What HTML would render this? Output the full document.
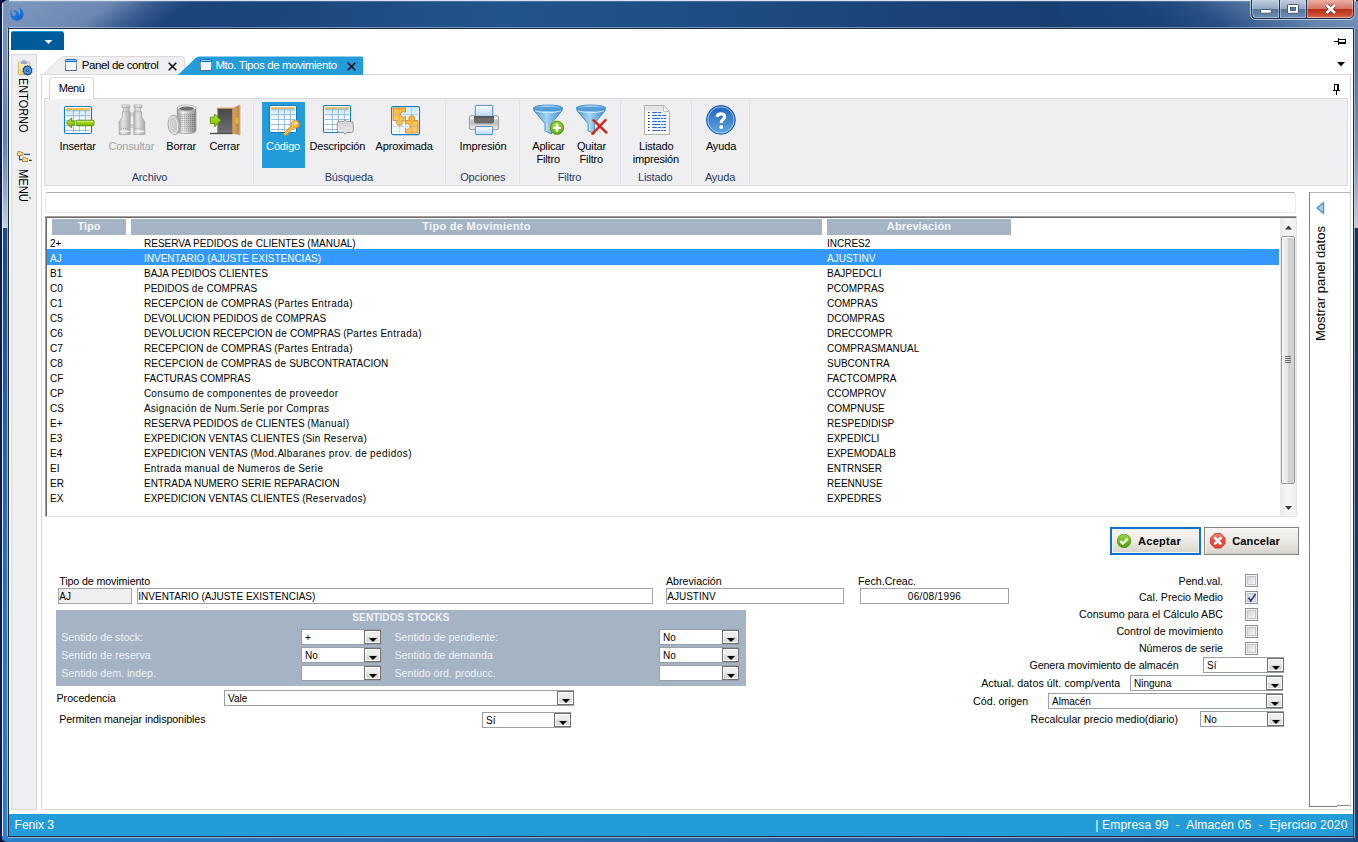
<!DOCTYPE html>
<html><head><meta charset="utf-8"><title>Fenix 3</title>
<style>

html,body{margin:0;padding:0;}
body{width:1358px;height:842px;overflow:hidden;position:relative;background:#1a4478;font-family:"Liberation Sans",sans-serif;font-size:11px;color:#000;}
.b{position:absolute;box-sizing:border-box;}
.t{position:absolute;white-space:nowrap;}
svg{position:absolute;overflow:visible;}
.combo{position:absolute;box-sizing:border-box;border:1px solid #9a9fa6;background:#fff;height:16px;}
.combo .cb{position:absolute;right:-1px;top:0;width:17px;height:14px;box-sizing:border-box;border:1px solid #6f6f6f;box-shadow:inset 0 0 0 1px #fff;background:linear-gradient(#ededed 0,#ededed 50%,#dbdbdb 50%,#dbdbdb 100%);}
.combo .cb:after{content:"";position:absolute;left:3.7px;top:7px;border-left:4px solid transparent;border-right:4px solid transparent;border-top:4px solid #000;}
.combo span{position:absolute;left:3px;top:0;font-size:10px;line-height:15px;}
.chk{position:absolute;box-sizing:border-box;width:13px;height:13px;border:1px solid #8e8f8f;background:#f4f4f4;box-shadow:inset 0 0 0 1px #f4f4f4, inset 0 0 0 2px #c4c6c9;}
.chk i{position:absolute;left:2px;top:2px;width:7px;height:7px;background:linear-gradient(135deg,#d4d6da,#f6f6f6);}
.fld{position:absolute;box-sizing:border-box;border:1px solid #a3a3a5;background:#fff;height:16px;font-size:10px;line-height:15px;padding-left:0.3px;white-space:nowrap;}
.row{position:absolute;left:47px;width:1232px;height:15px;font-size:10px;line-height:15px;white-space:nowrap;}
.row span{position:absolute;top:0;}
.row.selt{color:#fff;}
.row i{font-style:normal;letter-spacing:.44px;}
.hdr{position:absolute;background:#a4b4c5;color:#f2f5f8;font-weight:bold;font-size:11px;line-height:15px;text-align:center;height:16px;top:219px;}
.rl{color:#000;text-align:center;}
.gl{color:#2a3a66;}

</style></head>
<body>
<div class="b" style="left:0;top:0;width:1358px;height:842px;background:#1d4a82;"></div>
<div class="b" style="left:300px;top:0;width:758px;height:29px;background:linear-gradient(90deg,#1c467d 0px,#1f4b84 60px,#23538c 200px,#1f4d86 380px,#1b4379 600px,#173f72 758px);"></div>
<div class="b" style="left:0;top:0;width:300px;height:29px;background:linear-gradient(145deg,#7d96bc 12px,#6c88b2 66px,#35598d 92px,#1b447b 112px,#1c467d 196px);"></div>
<div class="b" style="left:1058px;top:0;width:300px;height:29px;background:linear-gradient(30deg,#173f72 0px,#1a4378 58px,#264e82 84px,#45699a 108px,#6484ad 134px,#7491b7 160px,#7491b7 175px);"></div>
<div class="b" style="left:2px;top:0;width:1354px;height:1px;background:#dbe4ef;"></div>
<div class="b" style="left:2px;top:1px;width:1354px;height:1px;background:#fff;opacity:.18;"></div>
<div class="b" style="left:8px;top:27px;width:1346px;height:1px;background:#fff;opacity:.4;"></div>
<div class="b" style="left:0;top:0;width:9px;height:842px;background:linear-gradient(180deg,#7b94bb 0px,#7690b8 60px,#5f82b1 140px,#8ea7c8 190px,#c5d2e2 228px,#1b4a8a 228px,#1f5698 330px,#2669b0 480px,#2a78c0 650px,#2b80c8 842px);"></div>
<div class="b" style="left:0;top:0;width:2px;height:842px;background:#0a1c4d;"></div>
<div class="b" style="left:2px;top:1px;width:1px;height:838px;background:#e3ebf5;"></div>
<div class="b" style="left:7px;top:28px;width:1px;height:810px;background:#c3d5ea;opacity:.7"></div>
<div class="b" style="left:2px;top:836px;width:1356px;height:6px;background:linear-gradient(90deg,#2b80c8 0px,#2a74ba 300px,#2868ab 700px,#225a9a 1000px,#1c4a85 1358px);"></div>
<div class="b" style="left:8px;top:837px;width:1347px;height:1px;background:#a9c3e2;opacity:.85"></div>
<div class="b" style="left:1353px;top:29px;width:5px;height:813px;background:linear-gradient(180deg,#5a7ba5 0px,#55769f 40px,#7e98bb 130px,#c4cdd9 199px,#14335f 199px,#163a69 500px,#1a4379 813px);"></div>
<div class="b" style="left:1354px;top:28px;width:1px;height:810px;background:#b9cde6;opacity:.7"></div>
<div class="b" style="left:1356px;top:0;width:2px;height:1px;background:#0a0f25;"></div>
<svg style="left:0;top:0" width="10" height="10"><path d="M0 0H7Q2 1 0 8Z" fill="#08123f"/></svg>
<svg style="left:0;top:832px" width="10" height="10"><path d="M0 10V4Q2 9 7 10Z" fill="#08123f"/></svg>
<div class="b" id="client" style="left:8px;top:28px;width:1346px;height:809px;background:#fff;border:1px solid #1a2f4d;"></div>
<svg style="left:4px;top:2px" width="30" height="24" viewBox="4 2 30 24"><defs><linearGradient id="lg" x1="0" y1="0" x2="1" y2="1"><stop offset="0" stop-color="#2f86e6"/><stop offset="1" stop-color="#0b62d0"/></linearGradient></defs>
<path d="M12.300 8.300C9.400 11 9.400 16.800 13 19.600C16 21.700 20.600 20.800 22.700 17.600C24.600 14.600 23.600 10.400 19 7.100C20.600 10.200 20.500 13.200 19.200 15.600C18.600 12.700 17.100 10.300 14.600 10C13.500 10 12.900 10.600 13 11.600C15.400 11.400 16.600 13.400 15.600 15C14.600 16.500 12.600 16.200 12 14.800C11.400 13 11.300 10.800 12.300 8.300Z" fill="url(#lg)"/>
</svg>
<svg style="left:1250px;top:0" width="105" height="21" viewBox="0 0 105 21">
<defs>
<linearGradient id="wb" x1="0" y1="0" x2="0" y2="1"><stop offset="0" stop-color="#c2cfdf"/><stop offset=".48" stop-color="#90a6c4"/><stop offset=".5" stop-color="#55749b"/><stop offset="1" stop-color="#7190b7"/></linearGradient>
<linearGradient id="wr" x1="0" y1="0" x2="0" y2="1"><stop offset="0" stop-color="#e9b0a5"/><stop offset=".48" stop-color="#d67363"/><stop offset=".5" stop-color="#b72f19"/><stop offset=".8" stop-color="#cb4a32"/><stop offset="1" stop-color="#dc7a62"/></linearGradient>
</defs>
<path d="M.5 0V14Q.5 19.5 6 19.5H98.500Q104 19.500 104 14V0" fill="none" stroke="#dfe8f3" stroke-opacity=".7" stroke-width="1"/>
<path d="M1.5 0V13.500Q1.5 18.500 6.5 18.500H98Q103.500 18.500 103.500 13.500V0Z" fill="url(#wb)"/>
<path d="M56.500 0V18.500H98Q103.500 18.500 103.500 13.500V0Z" fill="url(#wr)"/>
<path d="M1.5 0V13.500Q1.5 18.500 6.5 18.500H98Q103.500 18.500 103.500 13.500V0M29.500 0V18.500M56.500 0V18.500" fill="none" stroke="#1f2f4a" stroke-width="1"/>
<path d="M2.5 1V13.500Q2.5 17.500 6.5 17.500H28.500V1M30.500 1V17.500H55.500V1M57.500 1V17.500H98Q102.500 17.500 102.500 13.500V1" fill="none" stroke="#fff" stroke-opacity=".35"/>
<rect x="10.700" y="9.500" width="10.600" height="3.700" rx=".6" fill="#fff" stroke="#3c4f6c" stroke-width=".9"/>
<rect x="37.500" y="4.500" width="11" height="8.800" rx=".8" fill="#fff" stroke="#3c4f6c" stroke-width=".9"/>
<rect x="40.500" y="7.400" width="5" height="3" fill="#5878a2" stroke="#3c4f6c" stroke-width=".8"/>
<path d="M76.500 5L85 13M85 5L76.500 13" stroke="#4b2d2d" stroke-width="4.200" fill="none" stroke-opacity=".85"/>
<path d="M76.500 5L85 13M85 5L76.500 13" stroke="#fff" stroke-width="2.700" fill="none"/>
</svg>
<div class="b" style="left:9px;top:814px;width:1344px;height:22px;background:#259cda;"></div>
<div class="t " style="top:818.04px;font-size:12px;line-height:14px;left:14.60px;color:#fff;">Fenix 3</div>
<div class="t " style="top:818.04px;font-size:12px;line-height:14px;right:10.50px;color:#fff;letter-spacing:0.18px;">| Empresa 99&nbsp; -&nbsp; Almacén 05&nbsp; -&nbsp; Ejercicio 2020</div>
<div class="b" style="left:11px;top:31px;width:53px;height:19px;background:#005b9a;border-top:1px solid #1b95d9;border-radius:2px 3px 0 0;"></div>
<svg style="left:44px;top:39px" width="9" height="6"><path d="M0.5 1H8.5L4.5 5Z" fill="#fff"/></svg>
<div class="b" style="left:11px;top:54px;width:26px;height:756px;background:#efeff1;border:1px solid #d9d9dc;"></div>
<svg style="left:40px;top:54px" width="340" height="22" viewBox="40 54 340 22">
<path d="M43.5 74.5L61 57.5Q62 56.5 63.5 56.5H181Q184.5 56.5 184.5 60V74.5Z" fill="#efeff1" stroke="#d9d9dc"/>
<path d="M178 75L195.5 58Q197 56.5 199 56.5H361.5Q363.2 56.5 363.2 58.200V75Z" fill="#259cda"/>
</svg>
<div class="b" style="left:41px;top:74px;width:1310px;height:736px;border:1px solid #d9d9dc;background:#fff;"></div>
<div class="b" style="left:178px;top:74px;width:185px;height:1px;background:#259cda;"></div>
<svg style="left:65px;top:59px" width="12" height="12" viewBox="0 0 12 12"><defs><linearGradient id="tib65" x1="0" y1="0" x2="0" y2="1"><stop offset="0" stop-color="#b9a352"/><stop offset=".45" stop-color="#8a8f86"/><stop offset="1" stop-color="#566c96"/></linearGradient><linearGradient id="tif65" x1="0" y1="0" x2="0" y2="1"><stop offset="0" stop-color="#dff4fd"/><stop offset="1" stop-color="#ffffff"/></linearGradient></defs><rect x=".5" y="2.5" width="11" height="9" fill="url(#tif65)" stroke="url(#tib65)"/><path d="M0 3V1.600Q0 0 1.600 0H10.400Q12 0 12 1.600V3Z" fill="#1f6bc9"/><rect x="1" y="1" width="10" height=".9" fill="#a9d5f8"/></svg>
<svg style="left:200px;top:59px" width="12" height="12" viewBox="0 0 12 12"><defs><linearGradient id="tib200" x1="0" y1="0" x2="0" y2="1"><stop offset="0" stop-color="#b9a352"/><stop offset=".45" stop-color="#8a8f86"/><stop offset="1" stop-color="#566c96"/></linearGradient><linearGradient id="tif200" x1="0" y1="0" x2="0" y2="1"><stop offset="0" stop-color="#dff4fd"/><stop offset="1" stop-color="#ffffff"/></linearGradient></defs><rect x=".5" y="2.5" width="11" height="9" fill="url(#tif200)" stroke="url(#tib200)"/><path d="M0 3V1.600Q0 0 1.600 0H10.400Q12 0 12 1.600V3Z" fill="#1f6bc9"/><rect x="1" y="1" width="10" height=".9" fill="#a9d5f8"/></svg>
<div class="t " style="top:58.02px;font-size:11.5px;line-height:14px;left:81.70px;letter-spacing:-0.4px;">Panel de control</div>
<div class="t " style="top:58.02px;font-size:11.5px;line-height:14px;left:215.40px;color:#fff;letter-spacing:-0.4px;">Mto. Tipos de movimiento</div>
<svg style="left:168px;top:62px" width="9" height="9"><path d="M0.7 0.7L8.3 8.3M8.3 0.7L0.7 8.3" stroke="#000" stroke-width="1.4"/></svg>
<svg style="left:347px;top:62px" width="9" height="9"><path d="M0.7 0.7L8.3 8.3M8.3 0.7L0.7 8.3" stroke="#000" stroke-width="1.4"/></svg>
<div class="b" style="left:1334px;top:41px;width:4px;height:1px;background:#000;"></div>
<div class="b" style="left:1338px;top:38px;width:1px;height:7px;background:#000;"></div>
<div class="b" style="left:1339px;top:39px;width:7px;height:1px;background:#000;"></div>
<div class="b" style="left:1345px;top:39px;width:1px;height:5px;background:#000;"></div>
<div class="b" style="left:1339px;top:42px;width:7px;height:2px;background:#000;"></div>
<svg style="left:1337px;top:62px" width="8" height="5"><path d="M0 0H8L4 4.300Z" fill="#000"/></svg>
<div class="b" style="left:1334px;top:84px;width:1px;height:6px;background:#000;"></div>
<div class="b" style="left:1334px;top:84px;width:5px;height:1px;background:#000;"></div>
<div class="b" style="left:1337px;top:84px;width:2px;height:6px;background:#000;"></div>
<div class="b" style="left:1333px;top:90px;width:7px;height:1px;background:#000;"></div>
<div class="b" style="left:1336px;top:91px;width:1px;height:4px;background:#000;"></div>
<div class="b" style="left:44px;top:98px;width:1304px;height:88px;background:#efeff1;border:1px solid #d9d9dc;"></div>
<div class="b" style="left:49px;top:77px;width:45px;height:22px;background:#fff;border:1px solid #d9d9dc;border-bottom:none;border-radius:3px 3px 0 0;"></div>
<div class="b" style="left:50px;top:98px;width:43px;height:1px;background:#fff;"></div>
<div class="t " style="top:82.19px;font-size:11px;line-height:13px;left:58.80px;letter-spacing:-0.5px;">Menú</div>
<div class="b" style="left:253px;top:100px;width:1px;height:84px;background:#dfe0ee;"></div>
<div class="b" style="left:445px;top:100px;width:1px;height:84px;background:#dfe0ee;"></div>
<div class="b" style="left:519px;top:100px;width:1px;height:84px;background:#dfe0ee;"></div>
<div class="b" style="left:620px;top:100px;width:1px;height:84px;background:#dfe0ee;"></div>
<div class="b" style="left:691px;top:100px;width:1px;height:84px;background:#dfe0ee;"></div>
<div class="b" style="left:749px;top:100px;width:1px;height:84px;background:#dfe0ee;"></div>
<div class="b" style="left:262px;top:102px;width:43px;height:66px;background:#259cda;"></div>
<div class="t " style="top:139.69px;font-size:11px;line-height:13px;left:27.60px;width:100px;text-align:center;color:#000;letter-spacing:-0.15px;">Insertar</div>
<div class="t " style="top:139.69px;font-size:11px;line-height:13px;left:81.40px;width:100px;text-align:center;color:#a3a3a3;letter-spacing:-0.15px;">Consultar</div>
<div class="t " style="top:139.69px;font-size:11px;line-height:13px;left:131.20px;width:100px;text-align:center;color:#000;letter-spacing:-0.15px;">Borrar</div>
<div class="t " style="top:139.69px;font-size:11px;line-height:13px;left:174.70px;width:100px;text-align:center;color:#000;letter-spacing:-0.15px;">Cerrar</div>
<div class="t " style="top:139.69px;font-size:11px;line-height:13px;left:233.10px;width:100px;text-align:center;color:#fff;letter-spacing:-0.15px;">Código</div>
<div class="t " style="top:139.69px;font-size:11px;line-height:13px;left:287.30px;width:100px;text-align:center;color:#000;letter-spacing:-0.15px;">Descripción</div>
<div class="t " style="top:139.69px;font-size:11px;line-height:13px;left:354.10px;width:100px;text-align:center;color:#000;letter-spacing:-0.15px;">Aproximada</div>
<div class="t " style="top:139.69px;font-size:11px;line-height:13px;left:433.00px;width:100px;text-align:center;color:#000;letter-spacing:-0.15px;">Impresión</div>
<div class="t " style="top:139.69px;font-size:11px;line-height:13px;left:498.50px;width:100px;text-align:center;color:#000;letter-spacing:-0.15px;">Aplicar</div>
<div class="t " style="top:153.09px;font-size:11px;line-height:13px;left:498.20px;width:100px;text-align:center;color:#000;letter-spacing:-0.15px;">Filtro</div>
<div class="t " style="top:139.69px;font-size:11px;line-height:13px;left:541.50px;width:100px;text-align:center;color:#000;letter-spacing:-0.15px;">Quitar</div>
<div class="t " style="top:153.09px;font-size:11px;line-height:13px;left:541.30px;width:100px;text-align:center;color:#000;letter-spacing:-0.15px;">Filtro</div>
<div class="t " style="top:139.69px;font-size:11px;line-height:13px;left:606.20px;width:100px;text-align:center;color:#000;letter-spacing:-0.15px;">Listado</div>
<div class="t " style="top:153.09px;font-size:11px;line-height:13px;left:605.90px;width:100px;text-align:center;color:#000;letter-spacing:-0.15px;">impresión</div>
<div class="t " style="top:139.69px;font-size:11px;line-height:13px;left:671.00px;width:100px;text-align:center;color:#000;letter-spacing:-0.15px;">Ayuda</div>
<div class="t " style="top:170.89px;font-size:11px;line-height:13px;left:99.50px;width:100px;text-align:center;color:#2a3a66;letter-spacing:-0.15px;">Archivo</div>
<div class="t " style="top:170.89px;font-size:11px;line-height:13px;left:298.80px;width:100px;text-align:center;color:#2a3a66;letter-spacing:-0.15px;">Búsqueda</div>
<div class="t " style="top:170.89px;font-size:11px;line-height:13px;left:432.80px;width:100px;text-align:center;color:#2a3a66;letter-spacing:-0.15px;">Opciones</div>
<div class="t " style="top:170.89px;font-size:11px;line-height:13px;left:519.50px;width:100px;text-align:center;color:#2a3a66;letter-spacing:-0.15px;">Filtro</div>
<div class="t " style="top:170.89px;font-size:11px;line-height:13px;left:605.20px;width:100px;text-align:center;color:#2a3a66;letter-spacing:-0.15px;">Listado</div>
<div class="t " style="top:170.89px;font-size:11px;line-height:13px;left:670.00px;width:100px;text-align:center;color:#2a3a66;letter-spacing:-0.15px;">Ayuda</div>
<div class="b" style="left:45px;top:192px;width:1251px;height:21px;background:#fff;border:1px solid #e3e9ef;border-top-color:#abadb3;border-radius:3px;"></div>
<div class="b" style="left:45px;top:216px;width:1252px;height:301px;background:#fff;border:1px solid #e3e3e3;border-top:1px solid #a0a0a0;border-left:1px solid #a0a0a0;"></div>
<div class="b" style="left:46px;top:217px;width:1250px;height:299px;border-top:1px solid #696969;border-left:1px solid #696969;"></div>
<div class="hdr" style="left:52px;width:74px;">Tipo</div>
<div class="hdr" style="left:131px;width:691px;letter-spacing:.3px;">Tipo de Movimiento</div>
<div class="hdr" style="left:827px;width:184px;letter-spacing:.12px;">Abreviación</div>
<div class="b" style="left:47px;top:249px;width:1232px;height:16px;background:#3399ff;"></div>
<div class="row" style="top:236px"><span class="c1" style="left:3px">2+</span><span class="c2" style="left:97px">RESERVA PEDIDOS <i>de</i> CLIENTES (MANUAL)</span><span class="c3" style="left:780px">INCRES2</span></div>
<div class="row selt" style="top:251px"><span class="c1" style="left:3px">AJ</span><span class="c2" style="left:97px">INVENTARIO (AJUSTE EXISTENCIAS)</span><span class="c3" style="left:780px">AJUSTINV</span></div>
<div class="row" style="top:266px"><span class="c1" style="left:3px">B1</span><span class="c2" style="left:97px">BAJA PEDIDOS CLIENTES</span><span class="c3" style="left:780px">BAJPEDCLI</span></div>
<div class="row" style="top:281px"><span class="c1" style="left:3px">C0</span><span class="c2" style="left:97px">PEDIDOS <i>de</i> COMPRAS</span><span class="c3" style="left:780px">PCOMPRAS</span></div>
<div class="row" style="top:296px"><span class="c1" style="left:3px">C1</span><span class="c2" style="left:97px">RECEPCION <i>de</i> COMPRAS (P<i>artes</i> E<i>ntrada</i>)</span><span class="c3" style="left:780px">COMPRAS</span></div>
<div class="row" style="top:311px"><span class="c1" style="left:3px">C5</span><span class="c2" style="left:97px">DEVOLUCION PEDIDOS <i>de</i> COMPRAS</span><span class="c3" style="left:780px">DCOMPRAS</span></div>
<div class="row" style="top:326px"><span class="c1" style="left:3px">C6</span><span class="c2" style="left:97px">DEVOLUCION RECEPCION <i>de</i> COMPRAS (P<i>artes</i> E<i>ntrada</i>)</span><span class="c3" style="left:780px">DRECCOMPR</span></div>
<div class="row" style="top:341px"><span class="c1" style="left:3px">C7</span><span class="c2" style="left:97px">RECEPCION <i>de</i> COMPRAS (P<i>artes</i> E<i>ntrada</i>)</span><span class="c3" style="left:780px">COMPRASMANUAL</span></div>
<div class="row" style="top:356px"><span class="c1" style="left:3px">C8</span><span class="c2" style="left:97px">RECEPCION <i>de</i> COMPRAS <i>de</i> SUBCONTRATACION</span><span class="c3" style="left:780px">SUBCONTRA</span></div>
<div class="row" style="top:371px"><span class="c1" style="left:3px">CF</span><span class="c2" style="left:97px">FACTURAS COMPRAS</span><span class="c3" style="left:780px">FACTCOMPRA</span></div>
<div class="row" style="top:386px"><span class="c1" style="left:3px">CP</span><span class="c2" style="left:97px">C<i>onsumo</i> <i>de</i> <i>componentes</i> <i>de</i> <i>proveedor</i></span><span class="c3" style="left:780px">CCOMPROV</span></div>
<div class="row" style="top:401px"><span class="c1" style="left:3px">CS</span><span class="c2" style="left:97px">A<i>signación</i> <i>de</i> N<i>um.</i>S<i>erie</i> <i>por</i> C<i>ompras</i></span><span class="c3" style="left:780px">COMPNUSE</span></div>
<div class="row" style="top:416px"><span class="c1" style="left:3px">E+</span><span class="c2" style="left:97px">RESERVA PEDIDOS <i>de</i> CLIENTES (M<i>anual</i>)</span><span class="c3" style="left:780px">RESPEDIDISP</span></div>
<div class="row" style="top:431px"><span class="c1" style="left:3px">E3</span><span class="c2" style="left:97px">EXPEDICION VENTAS CLIENTES (S<i>in</i> R<i>eserva</i>)</span><span class="c3" style="left:780px">EXPEDICLI</span></div>
<div class="row" style="top:446px"><span class="c1" style="left:3px">E4</span><span class="c2" style="left:97px">EXPEDICION VENTAS (M<i>od.</i>A<i>lbaranes</i> <i>prov.</i> <i>de</i> <i>pedidos</i>)</span><span class="c3" style="left:780px">EXPEMODALB</span></div>
<div class="row" style="top:461px"><span class="c1" style="left:3px">EI</span><span class="c2" style="left:97px">E<i>ntrada</i> <i>manual</i> <i>de</i> N<i>umeros</i> <i>de</i> S<i>erie</i></span><span class="c3" style="left:780px">ENTRNSER</span></div>
<div class="row" style="top:476px"><span class="c1" style="left:3px">ER</span><span class="c2" style="left:97px">ENTRADA NUMERO SERIE REPARACION</span><span class="c3" style="left:780px">REENNUSE</span></div>
<div class="row" style="top:491px"><span class="c1" style="left:3px">EX</span><span class="c2" style="left:97px">EXPEDICION VENTAS CLIENTES (R<i>eservados</i>)</span><span class="c3" style="left:780px">EXPEDRES</span></div>
<div class="b" style="left:1280px;top:218px;width:16px;height:298px;background:linear-gradient(90deg,#e9e9eb,#f6f6f7 50%,#efeff0);"></div>
<div class="b" style="left:1281px;top:236px;width:14px;height:248px;border:1px solid #979797;border-radius:2px;background:linear-gradient(90deg,#f3f3f3 0%,#e6e6e8 45%,#cfcfd3 55%,#d6d6da 100%);box-shadow:inset 1px 1px 0 #fff;"></div>
<svg style="left:1285px;top:224.5px" width="7" height="5"><path d="M0 4.5L3.5 0.5L7 4.5Z" fill="#3c3c3c"/></svg>
<svg style="left:1285px;top:506px" width="7" height="5"><path d="M0 0L3.5 4L7 0Z" fill="#3c3c3c"/></svg>
<div class="b" style="left:1285px;top:356px;width:6px;height:7px;background:repeating-linear-gradient(180deg,#6b6b6b 0,#6b6b6b 1px,transparent 1px,transparent 2px);"></div>
<div class="b" style="left:1110px;top:527px;width:91px;height:28px;border:2px solid #0f72d2;background:linear-gradient(#f6f5f2 0%,#eceae5 50%,#e2dfd8 75%,#d6d3cb 100%);box-shadow:inset 0 0 0 1px #f6f3ec;"></div>
<div class="b" style="left:1204px;top:527px;width:95px;height:28px;border:1px solid #828282;background:linear-gradient(#f6f5f2 0%,#eceae5 50%,#e2dfd8 75%,#d6d3cb 100%);box-shadow:inset 1px 1px 0 #fbfaf8;"></div>
<div class="t " style="top:534.69px;font-size:11px;line-height:13px;left:1138.00px;font-weight:bold;letter-spacing:0.3px;">Aceptar</div>
<div class="t " style="top:534.69px;font-size:11px;line-height:13px;left:1232.20px;font-weight:bold;letter-spacing:0.17px;">Cancelar</div>
<svg style="left:1116px;top:533px" width="16" height="16" viewBox="0 0 16 16"><defs><linearGradient id="gok" x1="0" y1="0" x2="0" y2="1"><stop offset="0" stop-color="#a4d943"/><stop offset=".55" stop-color="#6fb81a"/><stop offset="1" stop-color="#4c9a0c"/></linearGradient></defs><circle cx="8" cy="8" r="6.7" fill="url(#gok)" stroke="#4d9610" stroke-width=".8"/><path d="M4.300 8.200L6.900 10.700L11.600 5.600" stroke="#fff" stroke-width="2.300" fill="none"/></svg>
<svg style="left:1210px;top:533px" width="16" height="16" viewBox="0 0 16 16"><defs><linearGradient id="gno" x1="0" y1="0" x2="0" y2="1"><stop offset="0" stop-color="#f7887a"/><stop offset=".5" stop-color="#ec4838"/><stop offset="1" stop-color="#e8402f"/></linearGradient></defs><path d="M4.800 .6H10.700L15 4.900V10.800L10.700 15H4.800L.6 10.800V4.900Z" fill="url(#gno)" stroke="#cf3526" stroke-width=".9"/><path d="M5 5L10.500 10.500M10.500 5L5 10.500" stroke="#fff" stroke-width="2.500" stroke-linecap="round"/></svg>
<div class="t " style="top:575.00px;font-size:10.67px;line-height:13px;left:59.20px;letter-spacing:-0.1px;">Tipo de movimiento</div>
<div class="t " style="top:575.00px;font-size:10.67px;line-height:13px;left:666.00px;">Abreviación</div>
<div class="t " style="top:575.00px;font-size:10.67px;line-height:13px;left:858.00px;">Fech.Creac.</div>
<div class="fld" style="left:58px;top:588px;width:74px;background:#efeff1;">AJ</div>
<div class="fld" style="left:137px;top:588px;width:516px;">INVENTARIO (AJUSTE EXISTENCIAS)</div>
<div class="fld" style="left:666px;top:588px;width:178px;">AJUSTINV</div>
<div class="fld" style="left:860px;top:588px;width:149px;text-align:center;padding-left:0;letter-spacing:.33px;">06/08/1996</div>
<div class="b" style="left:56px;top:610px;width:690px;height:76px;background:#a4b4c5;"></div>
<div class="t " style="top:611.63px;font-size:10px;line-height:12px;left:352.30px;color:#f0f3f7;font-weight:bold;letter-spacing:0.12px;">SENTIDOS STOCKS</div>
<div class="t " style="top:630.50px;font-size:10.67px;line-height:13px;left:61.20px;color:#eef2f6;">Sentido de stock:</div>
<div class="t " style="top:648.60px;font-size:10.67px;line-height:13px;left:61.20px;color:#eef2f6;">Sentido de reserva</div>
<div class="t " style="top:666.50px;font-size:10.67px;line-height:13px;left:61.20px;color:#eef2f6;">Sentido dem. indep.</div>
<div class="t " style="top:630.50px;font-size:10.67px;line-height:13px;left:394.50px;color:#eef2f6;">Sentido de pendiente:</div>
<div class="t " style="top:648.60px;font-size:10.67px;line-height:13px;left:394.50px;color:#eef2f6;">Sentido de demanda</div>
<div class="t " style="top:666.50px;font-size:10.67px;line-height:13px;left:394.50px;color:#eef2f6;">Sentido órd. producc.</div>
<div class="combo" style="left:301px;top:629px;width:80px;"><span>+</span><div class="cb"></div></div>
<div class="combo" style="left:301px;top:647px;width:80px;"><span>No</span><div class="cb"></div></div>
<div class="combo" style="left:301px;top:665px;width:80px;"><span></span><div class="cb"></div></div>
<div class="combo" style="left:659px;top:629px;width:80px;"><span>No</span><div class="cb"></div></div>
<div class="combo" style="left:659px;top:647px;width:80px;"><span>No</span><div class="cb"></div></div>
<div class="combo" style="left:659px;top:665px;width:80px;"><span></span><div class="cb"></div></div>
<div class="t " style="top:691.70px;font-size:10.67px;line-height:13px;left:56.50px;">Procedencia</div>
<div class="combo" style="left:224px;top:690px;width:350px;"><span>Vale</span><div class="cb"></div></div>
<div class="t " style="top:713.10px;font-size:10.67px;line-height:13px;left:59.20px;letter-spacing:-0.08px;">Permiten manejar indisponibles</div>
<div class="combo" style="left:482px;top:712px;width:89px;"><span>Sí</span><div class="cb"></div></div>
<div class="t " style="top:574.80px;font-size:10.67px;line-height:13px;right:135.00px;">Pend.val.</div>
<div class="chk" style="left:1245px;top:574px"><i></i></div>
<div class="t " style="top:590.60px;font-size:10.67px;line-height:13px;right:135.00px;">Cal. Precio Medio</div>
<div class="chk" style="left:1245px;top:591px"><i></i><svg style="left:1px;top:1px" width="10" height="10"><path d="M1.5 4.5L3.8 8L8.5 1" stroke="#2f3f8f" stroke-width="1.7" fill="none"/></svg></div>
<div class="t " style="top:607.80px;font-size:10.67px;line-height:13px;right:135.00px;">Consumo para el Cálculo ABC</div>
<div class="chk" style="left:1245px;top:608px"><i></i></div>
<div class="t " style="top:625.00px;font-size:10.67px;line-height:13px;right:135.00px;">Control de movimiento</div>
<div class="chk" style="left:1245px;top:625px"><i></i></div>
<div class="t " style="top:642.00px;font-size:10.67px;line-height:13px;right:135.00px;">Números de serie</div>
<div class="chk" style="left:1245px;top:642px"><i></i></div>
<div class="t " style="top:659.00px;font-size:10.67px;line-height:13px;right:179.50px;letter-spacing:-0.07px;">Genera movimiento de almacén</div>
<div class="combo" style="left:1203px;top:657px;width:81px;"><span>Sí</span><div class="cb"></div></div>
<div class="t " style="top:677.00px;font-size:10.67px;line-height:13px;right:237.70px;letter-spacing:0.08px;">Actual. datos últ. comp/venta</div>
<div class="combo" style="left:1130px;top:675px;width:153px;"><span>Ninguna</span><div class="cb"></div></div>
<div class="t " style="top:695.40px;font-size:10.67px;line-height:13px;right:329.80px;">Cód. origen</div>
<div class="combo" style="left:1048px;top:693px;width:235px;"><span>Almacén</span><div class="cb"></div></div>
<div class="t " style="top:712.50px;font-size:10.67px;line-height:13px;right:180.00px;">Recalcular precio medio(diario)</div>
<div class="combo" style="left:1200px;top:711px;width:84px;"><span>No</span><div class="cb"></div></div>
<div class="b" style="left:1309px;top:192px;width:42px;height:615px;border-left:1px solid #7d7d8c;border-top:1px solid #b8b8c0;"></div>
<div class="b" style="left:1309px;top:806px;width:28px;height:1px;background:#7d7d8c;"></div>
<div class="b" style="left:1337px;top:805px;width:13px;height:1px;background:#8a8a96;"></div>
<svg style="left:1316px;top:201px" width="9" height="14"><path d="M7.5 1.5V12.5L1 7Z" fill="#a8d0ee" stroke="#3f8fd0" stroke-width="1.2"/></svg>
<div class="t" style="left:1314px;top:341px;font-size:13px;line-height:14px;transform-origin:0 0;transform:rotate(-90deg);">Mostrar panel datos</div>
<div class="t" style="left:30.5px;top:78.3px;font-size:13px;line-height:15px;transform-origin:0 0;transform:rotate(90deg) scaleX(0.84);">ENTORNO</div>
<div class="t" style="left:30.5px;top:168.6px;font-size:13px;line-height:15px;transform-origin:0 0;transform:rotate(90deg) scaleX(0.86);">MENÚ</div>
<svg style="left:12px;top:56px" width="24" height="24" viewBox="12 56 24 24">
<defs><linearGradient id="gclip" x1="0" y1="0" x2="0" y2="1"><stop offset="0" stop-color="#fdf1d3"/><stop offset="1" stop-color="#fbd26a"/></linearGradient>
<linearGradient id="gclp2" x1="0" y1="0" x2="0" y2="1"><stop offset="0" stop-color="#b9d0e4"/><stop offset="1" stop-color="#7f8fc4"/></linearGradient></defs>
<rect x="18.4" y="62" width="11.4" height="12.6" rx="1.3" fill="url(#gclip)" stroke="#d6a050" stroke-width=".8"/>
<path d="M20.2 63.8L21.6 62V60.6Q21.6 59.8 22.6 59.8H25.4Q26.4 59.8 26.4 60.6V62L27.8 63.8Z" fill="url(#gclp2)"/>
<g transform="translate(27.5 70.4)">
<path d="M0 -4.6L1.3 -3.6L2.9 -3.6L3.3 -2.2L4.5 -1.2L3.9 0.2L4.4 1.7L3.1 2.6L2.6 4L1 3.8L-0.3 4.6L-1.5 3.7L-3.1 3.6L-3.4 2.1L-4.5 1L-3.9 -0.4L-4.3 -1.9L-3 -2.7L-2.4 -4.1L-0.9 -3.8Z" fill="#5b97d4" stroke="#0a4ba0" stroke-width="1.1" stroke-linejoin="round"/>
<circle r="1.5" fill="#0a4ba0"/><circle r=".55" fill="#ffe27a"/></g>
</svg>
<svg style="left:12px;top:146px" width="24" height="24" viewBox="12 146 24 24">
<defs><linearGradient id="gfold" x1="0" y1="0" x2="0" y2="1"><stop offset="0" stop-color="#fff3bd"/><stop offset="1" stop-color="#f8c648"/></linearGradient></defs>
<path d="M19.5 155.8V159.6H22.4" fill="none" stroke="#0b5a9e" stroke-width="1.1"/>
<path d="M17.4 155.5V152.4H18.2V151.4H20.6V152.4H22.8V155.5Z" fill="url(#gfold)" stroke="#b67a33" stroke-width=".8" stroke-linejoin="round"/>
<path d="M22.5 161.5V158.4H23.3V157.4H25.7V158.4H27.8V161.5Z" fill="url(#gfold)" stroke="#b67a33" stroke-width=".8" stroke-linejoin="round"/>
<path d="M24 154.4H30.1M29 160.4H32.1" stroke="#0b5a9e" stroke-width="1.2"/>
</svg>
<svg style="left:44px;top:98px" width="720" height="90" viewBox="44 98 720 90">
<defs>
<linearGradient id="tblue" x1="0" y1="0" x2="0" y2="1"><stop offset="0" stop-color="#cfe9fc"/><stop offset="1" stop-color="#ffffff"/></linearGradient>
<linearGradient id="ggreen" x1="0" y1="0" x2="0" y2="1"><stop offset="0" stop-color="#c6e645"/><stop offset=".5" stop-color="#9ccf12"/><stop offset="1" stop-color="#7fb800"/></linearGradient>
<linearGradient id="gsil" x1="0" y1="0" x2="1" y2="0"><stop offset="0" stop-color="#b4b4b6"/><stop offset=".35" stop-color="#e6e6e8"/><stop offset=".7" stop-color="#c4c4c7"/><stop offset="1" stop-color="#a9a9ac"/></linearGradient>
<linearGradient id="gcan" x1="0" y1="0" x2="1" y2="0"><stop offset="0" stop-color="#9a9a9c"/><stop offset=".3" stop-color="#f2f2f3"/><stop offset=".6" stop-color="#c9c9cb"/><stop offset="1" stop-color="#8f8f92"/></linearGradient>
<linearGradient id="gdoor" x1="0" y1="0" x2="0" y2="1"><stop offset="0" stop-color="#474747"/><stop offset="1" stop-color="#6d7278"/></linearGradient>
<linearGradient id="gwood" x1="0" y1="0" x2="1" y2="0"><stop offset="0" stop-color="#d7a463"/><stop offset="1" stop-color="#b98443"/></linearGradient>
<linearGradient id="gkey" x1="0" y1="0" x2="1" y2="1"><stop offset="0" stop-color="#ffd977"/><stop offset="1" stop-color="#f0a321"/></linearGradient>
<linearGradient id="gtip" x1="0" y1="0" x2="0" y2="1"><stop offset="0" stop-color="#cfcfcf"/><stop offset="1" stop-color="#ececec"/></linearGradient>
<linearGradient id="gpuz" x1="0" y1="0" x2="0" y2="1"><stop offset="0" stop-color="#fdb83d"/><stop offset="1" stop-color="#fdcb6a"/></linearGradient>
<linearGradient id="gpap" x1="0" y1="0" x2="0" y2="1"><stop offset="0" stop-color="#ffffff"/><stop offset="1" stop-color="#b5d8fa"/></linearGradient>
<linearGradient id="gprn" x1="0" y1="0" x2="0" y2="1"><stop offset="0" stop-color="#e9e9ea"/><stop offset=".5" stop-color="#bdbdbf"/><stop offset="1" stop-color="#f0f0f1"/></linearGradient>
<linearGradient id="gfun" x1="0" y1="0" x2="1" y2="0"><stop offset="0" stop-color="#4b9bd8"/><stop offset=".45" stop-color="#a3d4f3"/><stop offset="1" stop-color="#3f8fd2"/></linearGradient>
<linearGradient id="gfun2" x1="0" y1="0" x2="1" y2="0"><stop offset="0" stop-color="#5aa6de"/><stop offset=".5" stop-color="#c2e3f8"/><stop offset="1" stop-color="#5aa6de"/></linearGradient>
<radialGradient id="gplus" cx="45%" cy="35%" r="70%"><stop offset="0" stop-color="#b7e04a"/><stop offset="1" stop-color="#4f9f0b"/></radialGradient>
<linearGradient id="ghelp" x1="0" y1="0" x2="0" y2="1"><stop offset="0" stop-color="#1f62bd"/><stop offset="1" stop-color="#62a7df"/></linearGradient>
<linearGradient id="gpage" x1="0" y1="0" x2="0" y2="1"><stop offset="0" stop-color="#f3f3f3"/><stop offset="1" stop-color="#ffffff"/></linearGradient>
<pattern id="dots" x="177" y="113.4" width="2.05" height="2.05" patternUnits="userSpaceOnUse"><rect x=".55" y=".55" width=".95" height=".95" fill="#5f5f62"/></pattern>
</defs>
<g transform="translate(64,106)"><rect x=".5" y=".5" width="27" height="27" rx="1.6" fill="#fff" stroke="#0f7cc2" stroke-width="1.1"/><rect x="2" y="4.4" width="24" height="12" fill="url(#tblue)"/><rect x="2.2" y="2.1" width="6.6" height="2.1" fill="#fbb836"/><rect x="10" y="2.1" width="4.8" height="2.1" fill="#fbb836"/><rect x="16" y="2.1" width="4.8" height="2.1" fill="#fbb836"/><rect x="22" y="2.1" width="3.8" height="2.1" fill="#fbb836"/><path d="M2 4.7H26" stroke="#8fb6dc" stroke-width=".9"/><path d="M2 9.6H26" stroke="#8fb6dc" stroke-width=".9"/><path d="M2 14.5H26" stroke="#8fb6dc" stroke-width=".9"/><path d="M2 19.5H26" stroke="#8fb6dc" stroke-width=".9"/><path d="M2 24.5H26" stroke="#8fb6dc" stroke-width=".9"/><path d="M9.4 2.2V26" stroke="#8fb6dc" stroke-width=".9"/><path d="M15.4 2.2V26" stroke="#8fb6dc" stroke-width=".9"/><path d="M21.4 2.2V26" stroke="#8fb6dc" stroke-width=".9"/></g><path d="M66.3 123L71.6 118V121.1H74.4V124.9H71.6V128Z" fill="url(#ggreen)" stroke="#4f9307" stroke-width=".9" stroke-linejoin="round"/><rect x="76.2" y="120.2" width="17.8" height="5.6" rx="1.2" fill="url(#ggreen)" stroke="#4f9307" stroke-width=".9"/><path d="M77.2 121.6H93" stroke="#e3f58f" stroke-width=".8" opacity=".9"/><rect x="129" y="113" width="6" height="3" fill="#d9d9db" stroke="#b3b3b6" stroke-width=".5"/><rect x="129" y="124.4" width="6" height="2.8" fill="#d9d9db" stroke="#b3b3b6" stroke-width=".5"/><path d="M122.0 105H130.0V107.5H129.2V111.8H130.2V134.6H119.2V121.6L122.4 117V111.8H123.4V107.5H122.0Z" fill="url(#gsil)" stroke="#a2a2a5" stroke-width=".7"/><path d="M122.2 107.5H129.8M122.60000000000001 111.8H130.0" stroke="#a9a9ac" stroke-width=".7"/><path d="M122.4 105.8H129.6" stroke="#dededf" stroke-width="1"/><path d="M119.8 131.4H129.6" stroke="#f6f6f7" stroke-width="1.3"/><path d="M121.0 128.4H128.6" stroke="#8f8f92" stroke-width=".8" stroke-dasharray=".8 1.2"/><path d="M142.0 105H134.0V107.5H134.8V111.8H133.8V134.6H144.8V121.6L141.60000000000002 117V111.8H140.60000000000002V107.5H142.0Z" fill="url(#gsil)" stroke="#a2a2a5" stroke-width=".7"/><path d="M134.20000000000002 107.5H141.8M134.0 111.8H141.4" stroke="#a9a9ac" stroke-width=".7"/><path d="M134.4 105.8H141.60000000000002" stroke="#dededf" stroke-width="1"/><path d="M134.4 131.4H144.20000000000002" stroke="#f6f6f7" stroke-width="1.3"/><path d="M135.60000000000002 128.4H143.20000000000002" stroke="#8f8f92" stroke-width=".8" stroke-dasharray=".8 1.2"/><path d="M177.2 108V130.5Q177.2 133.6 186.6 133.6Q196 133.6 196 130.5V108Z" fill="url(#gcan)" stroke="#8c8c8f" stroke-width=".6"/><rect x="178.6" y="113.4" width="16.4" height="18.4" fill="url(#dots)" opacity=".85"/><ellipse cx="186.6" cy="108" rx="9.4" ry="3" fill="#f4f4f5" stroke="#9a9a9d" stroke-width=".6"/><ellipse cx="186.6" cy="108.6" rx="7.6" ry="2" fill="#6f6f72"/><ellipse cx="174.2" cy="125" rx="6.1" ry="9.8" fill="url(#gsil)" stroke="#9a9a9d" stroke-width=".7" transform="rotate(-6 174.2 125)"/><ellipse cx="173.4" cy="125" rx="4.2" ry="8" fill="#c9c9cc" stroke="#ededee" stroke-width=".9" transform="rotate(-6 173.4 125)"/><rect x="171.6" y="121" width="2.2" height="7.6" rx=".8" fill="#c2c2c5" stroke="#f4f4f5" stroke-width=".6" transform="rotate(-6 172.7 125)"/><rect x="217.6" y="108.4" width="15" height="25" fill="url(#gdoor)"/><path d="M217.6 133.4V108.4H232.6V133.4" fill="none" stroke="#c48d4c" stroke-width="1.1"/><path d="M210 133.5H232.6" stroke="#4a4a4a" stroke-width="1.3"/><path d="M232.6 108.6L240 105V134.8L232.6 133.2Z" fill="url(#gwood)" stroke="#b37e3e" stroke-width=".5"/><path d="M239.6 105V134.6" stroke="#e1b06c" stroke-width=".8"/><rect x="236.2" y="118" width="1.6" height="4.8" fill="none" stroke="#f1c232" stroke-width="1"/><path d="M210.4 117.2H214.6V114L220.8 120.4L214.6 126.8V123.6H210.4Z" fill="url(#ggreen)" stroke="#4f9307" stroke-width=".9" stroke-linejoin="round"/><g transform="translate(269,105)"><rect x=".5" y=".5" width="27" height="27" rx="1.6" fill="#fff" stroke="#0f7cc2" stroke-width="1.1"/><rect x="2" y="4.4" width="24" height="12" fill="url(#tblue)"/><rect x="2.2" y="2.1" width="6.6" height="2.1" fill="#fbb836"/><rect x="10" y="2.1" width="4.8" height="2.1" fill="#fbb836"/><rect x="16" y="2.1" width="4.8" height="2.1" fill="#fbb836"/><rect x="22" y="2.1" width="3.8" height="2.1" fill="#fbb836"/><path d="M2 4.7H26" stroke="#8fb6dc" stroke-width=".9"/><path d="M2 9.6H26" stroke="#8fb6dc" stroke-width=".9"/><path d="M2 14.5H26" stroke="#8fb6dc" stroke-width=".9"/><path d="M2 19.5H26" stroke="#8fb6dc" stroke-width=".9"/><path d="M2 24.5H26" stroke="#8fb6dc" stroke-width=".9"/><path d="M9.4 2.2V26" stroke="#8fb6dc" stroke-width=".9"/><path d="M15.4 2.2V26" stroke="#8fb6dc" stroke-width=".9"/><path d="M21.4 2.2V26" stroke="#8fb6dc" stroke-width=".9"/></g><path d="M292.6 126.6L285.2 134" stroke="#cf8a1d" stroke-width="3.6" stroke-linecap="round"/><circle cx="295.2" cy="124.3" r="4" fill="url(#gkey)" stroke="#cf8a1d" stroke-width=".8"/><path d="M292.8 126.6L285.2 134" stroke="#f8bd44" stroke-width="2.2" stroke-linecap="round"/><path d="M288.6 132.4L289.8 133.4M287 134L288 135" stroke="#e29e2a" stroke-width="1.2"/><circle cx="296" cy="123.4" r="1.3" fill="#fff" stroke="#e0a030" stroke-width=".4"/><g transform="translate(323,105)"><rect x=".5" y=".5" width="27" height="27" rx="1.6" fill="#fff" stroke="#0f7cc2" stroke-width="1.1"/><rect x="2" y="4.4" width="24" height="12" fill="url(#tblue)"/><rect x="2.2" y="2.1" width="6.6" height="2.1" fill="#fbb836"/><rect x="10" y="2.1" width="4.8" height="2.1" fill="#fbb836"/><rect x="16" y="2.1" width="4.8" height="2.1" fill="#fbb836"/><rect x="22" y="2.1" width="3.8" height="2.1" fill="#fbb836"/><path d="M2 4.7H26" stroke="#8fb6dc" stroke-width=".9"/><path d="M2 9.6H26" stroke="#8fb6dc" stroke-width=".9"/><path d="M2 14.5H26" stroke="#8fb6dc" stroke-width=".9"/><path d="M2 19.5H26" stroke="#8fb6dc" stroke-width=".9"/><path d="M2 24.5H26" stroke="#8fb6dc" stroke-width=".9"/><path d="M9.4 2.2V26" stroke="#8fb6dc" stroke-width=".9"/><path d="M15.4 2.2V26" stroke="#8fb6dc" stroke-width=".9"/><path d="M21.4 2.2V26" stroke="#8fb6dc" stroke-width=".9"/></g><path d="M339 121.4H343.8L345.2 119.8L346.6 121.4H351.4Q353.2 121.4 353.2 123.2V130.6Q353.2 132.4 351.4 132.4H346.6L345.2 134.4L343.8 132.4H339Q337.2 132.4 337.2 130.6V123.2Q337.2 121.4 339 121.4Z" fill="url(#gtip)" stroke="#8d8986" stroke-width=".8"/><rect x="391.5" y="106.6" width="28" height="28" rx="1.6" fill="#fff" stroke="#0f7cc2" stroke-width="1.1"/><rect x="393" y="108" width="25" height="25" fill="url(#tblue)"/><rect x="393" y="120.5" width="12.5" height="12.5" fill="#f4faff"/><path d="M393 108H405.4V112.3A2.9 2.9 0 1 0 405.4 116.5V120.6H401.5A2.9 2.9 0 1 1 397.5 120.6H393Z" fill="url(#gpuz)" stroke="#d9791b" stroke-width=".8"/><path d="M405.4 120.6H409.7A2.9 2.9 0 1 1 413.7 120.6H418V133H405.4V128.6A2.9 2.9 0 1 0 405.4 124.4Z" fill="url(#gpuz)" stroke="#d9791b" stroke-width=".8"/><path d="M399.6 108V133M411.6 108V133M393 114.4H418M393 126.6H418" stroke="#7fa6c8" stroke-width=".7" opacity=".55"/><rect x="469.4" y="115.6" width="29" height="14" rx="1.6" fill="url(#gprn)" stroke="#8e8e90" stroke-width=".8"/><rect x="475.3" y="105.4" width="17.4" height="11" rx="1" fill="url(#gpap)" stroke="#3b7fcb" stroke-width=".9"/><path d="M474 116.2H494V121.4Q494 123.4 492 123.4H476Q474 123.4 474 121.4Z" fill="#6b6b6d"/><path d="M474 117H494" stroke="#4e4e50" stroke-width="1.4"/><rect x="475.3" y="126.6" width="17.4" height="8" rx="1" fill="url(#gpap)" stroke="#3b7fcb" stroke-width=".9"/><path d="M470.4 118.4H473.4M494.6 118.4H497.6" stroke="#fafafa" stroke-width="1.2"/><path d="M533.8 107.6V110.4L545.0 123.6V130.8L551.4 134V123.6L562.1999999999999 110.4V107.6Z" fill="url(#gfun)" stroke="#2f7dc2" stroke-width=".8" stroke-linejoin="round"/><ellipse cx="548.0" cy="107.8" rx="14.2" ry="2.8" fill="url(#gfun2)" stroke="#2f7dc2" stroke-width=".8"/><ellipse cx="548.0" cy="108.3" rx="11.8" ry="1.6" fill="#4f9edb"/><path d="M534.8 110.8Q548.0 114.6 561.1999999999999 110.8" stroke="#d9eefb" stroke-width=".9" fill="none"/><path d="M546.8 124V131" stroke="#d9eefb" stroke-width="1" opacity=".8"/><circle cx="557" cy="127.8" r="6.7" fill="url(#gplus)" stroke="#4c940d" stroke-width=".8"/><path d="M553 127.8H561M557 123.8V131.8" stroke="#fff" stroke-width="2.3"/><path d="M576.8 107.6V110.4L588.0 123.6V130.8L594.4 134V123.6L605.1999999999999 110.4V107.6Z" fill="url(#gfun)" stroke="#2f7dc2" stroke-width=".8" stroke-linejoin="round"/><ellipse cx="591.0" cy="107.8" rx="14.2" ry="2.8" fill="url(#gfun2)" stroke="#2f7dc2" stroke-width=".8"/><ellipse cx="591.0" cy="108.3" rx="11.8" ry="1.6" fill="#4f9edb"/><path d="M577.8 110.8Q591.0 114.6 604.1999999999999 110.8" stroke="#d9eefb" stroke-width=".9" fill="none"/><path d="M589.8 124V131" stroke="#d9eefb" stroke-width="1" opacity=".8"/><path d="M592.4 133.8L605.6 120M593.4 120.2L606.4 132.6" stroke="#dc1f14" stroke-width="2.4" stroke-linecap="round"/><path d="M644.5 105.5H663.6L669.5 111.4V134.5H644.5Z" fill="url(#gpage)" stroke="#a9a9ab" stroke-width=".9"/><rect x="645.2" y="106.2" width="18" height="4.4" fill="#e4e4e5"/><path d="M663.6 105.5V111.4H669.5Z" fill="#fff" stroke="#a9a9ab" stroke-width=".8"/><rect x="648" y="112.0" width="1.6" height="1" fill="#333"/><rect x="652.2" y="111.95" width="4.8" height="1.1" fill="#1c6cf0"/><rect x="658" y="111.95" width="3.0" height="1.1" fill="#1c6cf0"/><rect x="648" y="115.0" width="1.6" height="1" fill="#333"/><rect x="652.2" y="114.95" width="4.8" height="1.1" fill="#1c6cf0"/><rect x="658" y="114.95" width="3.2" height="1.1" fill="#1c6cf0"/><rect x="662.2" y="114.95" width="3.8" height="1.1" fill="#1c6cf0"/><rect x="648" y="118.0" width="1.6" height="1" fill="#333"/><rect x="652.2" y="117.95" width="7.8" height="1.1" fill="#1c6cf0"/><rect x="661" y="117.95" width="2.2" height="1.1" fill="#1c6cf0"/><rect x="664" y="117.95" width="2.0" height="1.1" fill="#1c6cf0"/><rect x="648" y="121.0" width="1.6" height="1" fill="#333"/><rect x="652.2" y="120.95" width="4.8" height="1.1" fill="#1c6cf0"/><rect x="658" y="120.95" width="3.2" height="1.1" fill="#1c6cf0"/><rect x="662.2" y="120.95" width="3.8" height="1.1" fill="#1c6cf0"/><rect x="648" y="124.0" width="1.6" height="1" fill="#333"/><rect x="652.2" y="123.95" width="7.8" height="1.1" fill="#1c6cf0"/><rect x="661" y="123.95" width="2.2" height="1.1" fill="#1c6cf0"/><rect x="664" y="123.95" width="2.0" height="1.1" fill="#1c6cf0"/><rect x="648" y="127.0" width="1.6" height="1" fill="#333"/><rect x="652.2" y="126.95" width="4.8" height="1.1" fill="#1c6cf0"/><rect x="658" y="126.95" width="3.2" height="1.1" fill="#1c6cf0"/><rect x="662.2" y="126.95" width="3.8" height="1.1" fill="#1c6cf0"/><rect x="648" y="130.0" width="1.6" height="1" fill="#333"/><rect x="652.2" y="129.95" width="7.8" height="1.1" fill="#1c6cf0"/><rect x="661" y="129.95" width="2.2" height="1.1" fill="#1c6cf0"/><rect x="664" y="129.95" width="2.0" height="1.1" fill="#1c6cf0"/><circle cx="720.9" cy="119.9" r="14.4" fill="url(#ghelp)" stroke="#1b59ae" stroke-width="1"/><circle cx="720.9" cy="119.9" r="13.1" fill="none" stroke="#9fd0f5" stroke-width=".9"/><path d="M717.2 117Q717.2 113.9 720.9 113.9Q724.6 113.9 724.6 116.8Q724.6 118.5 722.9 119.6Q721.2 120.8 721.2 123" fill="none" stroke="#fff" stroke-width="3.1"/><circle cx="721.2" cy="127" r="1.9" fill="#fff"/></svg>
</body></html>
